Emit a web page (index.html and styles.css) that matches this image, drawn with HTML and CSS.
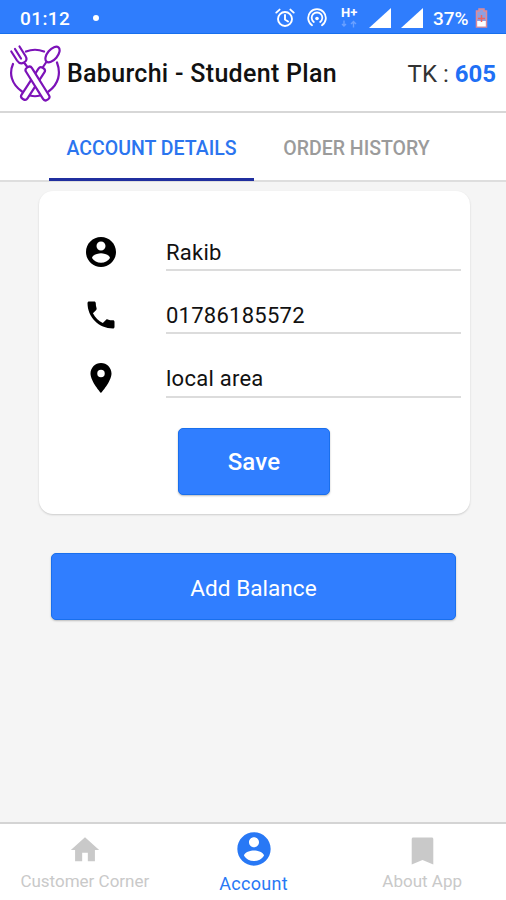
FILE: index.html
```html
<!doctype html>
<html>
<head>
<meta charset="utf-8">
<title>Baburchi - Student Plan</title>
<meta name="viewport" content="width=device-width,initial-scale=1">
<link rel="stylesheet" href="styles.css">
</head>
<body>
<div class="status">
	<span class="time">01:12</span>
	<span class="dot"></span>
	<svg class="alarm" width="20" height="20" viewBox="0 0 20 20" fill="none" stroke="#fff" stroke-width="1.9" stroke-linecap="round">
		<circle cx="10" cy="11" r="7"/><path d="M10 7v4.5l3 2M1.3 4.6l3.3-3M18.7 4.6l-3.3-3"/>
	</svg>
	<svg class="hotspot" width="20" height="20" viewBox="0 0 20 20" fill="none" stroke="#fff" stroke-width="1.8" stroke-linecap="round">
		<path d="M5 17.2a8.8 8.8 0 1 1 10 0M6.8 14a5.3 5.3 0 1 1 6.4 0"/><circle cx="10" cy="10.500" r="1.8" fill="#fff" stroke="none"/>
	</svg>
	<span class="net">
		<b>H+</b>
		<svg width="16" height="8" viewBox="0 0 16 7" fill="none" stroke="#6aa0ff" stroke-width="1.4"><path d="M3 0v5M1 3.500l2 2 2-2M12.500 7V2M10 3.500l2.500-2.500 2.500 2.500"/></svg>
	</span>
	<svg class="signal" width="22" height="20" viewBox="0 0 22 20"><path d="M0 20L22 0v20z" fill="#fff"/></svg>
	<svg class="signal two" width="22" height="20" viewBox="0 0 22 20"><path d="M0 20L22 0v20z" fill="#fff"/></svg>
	<span class="percent">37%</span>
	<svg class="battery" width="13" height="20" viewBox="0 0 13 20">
		<path d="M4 1h5v2h2.500v16h-10V3H4z" fill="#8f9fe0" stroke="#e28a93" stroke-width="1.500"/>
		<path d="M2.200 13h8.600v5.500H2.200z" fill="#fff"/><path d="M6.500 7v7M3 10.500h7" stroke="#ee6560" stroke-width="1.500"/>
	</svg>
</div>
<header class="header">
	<svg class="logo" width="52" height="58" viewBox="0 0 52 58" fill="none" stroke="#7c12b8" stroke-width="2.200" stroke-linecap="round" stroke-linejoin="round">
		<path d="M17 7.500Q26 4 35 7.500M4 20C0 29 2 40 13 47.500M48 18.500C52 29 50 40 39.500 47.500M21 51.500q5 1.500 10 0"/>
		<path d="M2.300 7.500L8 16.500Q11 21 15 18.500T16.500 12L10.500 2.500M6 5l6 9.500M15 18.500l3 4M34 23l3-4.500"/>
		<ellipse cx="43.500" cy="10.500" rx="5" ry="9.300" transform="rotate(40 43.500 10.500)"/>
		<rect x="20.500" y="21" width="7" height="37" rx="3" transform="rotate(33 24 39.500)" fill="#fff"/>
		<rect x="25" y="20.500" width="7" height="38" rx="3" transform="rotate(-32 28.500 39.500)" fill="#fff"/>
	</svg>
	<h1 class="title">Baburchi - Student Plan</h1>
	<span class="balance">TK : <b>605</b></span>
</header>
<nav class="tabs">
	<a class="tab active">ACCOUNT DETAILS</a>
	<a class="tab">ORDER HISTORY</a>
</nav>
<main class="content">
	<form class="card">
		<div class="row">
			<svg width="36" height="36" viewBox="0 0 24 24"><path d="M12 2C6.480 2 2 6.480 2 12s4.480 10 10 10 10-4.480 10-10S17.520 2 12 2zm0 3c1.660 0 3 1.340 3 3s-1.340 3-3 3-3-1.340-3-3 1.340-3 3-3zm0 14.200c-2.500 0-4.710-1.280-6-3.220.030-1.990 4-3.080 6-3.080 1.990 0 5.970 1.090 6 3.080-1.290 1.940-3.500 3.220-6 3.220z"/></svg>
			<span class="field name">Rakib</span>
		</div>
		<div class="row">
			<svg width="36" height="36" viewBox="0 0 24 24"><path d="M6.620 10.790c1.440 2.830 3.760 5.140 6.590 6.590l2.200-2.200c.270-.270.670-.360 1.020-.240 1.120.370 2.330.570 3.570.570.550 0 1 .450 1 1V20c0 .550-.450 1-1 1-9.390 0-17-7.610-17-17 0-.550.450-1 1-1h3.500c.550 0 1 .450 1 1 0 1.250.200 2.450.570 3.570.110.350.030.740-.250 1.020l-2.200 2.200z"/></svg>
			<span class="field phone">01786185572</span>
		</div>
		<div class="row">
			<svg width="36" height="36" viewBox="0 0 24 24"><path d="M12 2C8.130 2 5 5.130 5 9c0 5.250 7 13 7 13s7-7.750 7-13c0-3.870-3.130-7-7-7zm0 9.500a2.500 2.500 0 0 1 0-5 2.500 2.500 0 0 1 0 5z"/></svg>
			<span class="field area">local area</span>
		</div>
		<button class="btn save" type="button">Save</button>
	</form>
	<button class="btn add" type="button">Add Balance</button>
</main>
<footer class="bottom">
	<a class="item">
		<svg width="34" height="34" viewBox="0 0 24 24"><path d="M10 20v-6h4v6h5v-8h3L12 3 2 12h3v8z"/></svg>
		<span class="corner">Customer Corner</span>
	</a>
	<a class="item active">
		<svg width="40" height="40" viewBox="0 0 24 24"><path d="M12 2C6.480 2 2 6.480 2 12s4.480 10 10 10 10-4.480 10-10S17.520 2 12 2zm0 3c1.660 0 3 1.340 3 3s-1.340 3-3 3-3-1.340-3-3 1.340-3 3-3zm0 14.200c-2.500 0-4.710-1.280-6-3.220.030-1.990 4-3.080 6-3.080 1.990 0 5.970 1.090 6 3.080-1.290 1.940-3.500 3.220-6 3.220z"/></svg>
		<span class="account">Account</span>
	</a>
	<a class="item">
		<svg width="37" height="36" viewBox="0 0 24 24" preserveAspectRatio="none"><path d="M18 3H6c-.600 0-1 .400-1 1v17l7-3 7 3V4c0-.600-.400-1-1-1z"/></svg>
		<span class="about">About App</span>
	</a>
</footer>
</body>
</html>
```
FILE: styles.css
```css
*{box-sizing:border-box;}
body{margin:0;height:900px;display:flex;flex-direction:column;overflow:hidden;font-family:Roboto,"Liberation Sans",sans-serif;background:#f5f5f5;color:#111;}
svg{display:block;flex:none;}
.status{height:34px;display:flex;align-items:center;padding:2px 18px 0 20px;background:#2f7dfd;border-bottom:1px solid #176fed;color:#fff;font-size:19px;font-weight:500;}
.time{width:50px;padding-top:1px;letter-spacing:0.4px;}
.dot{width:6px;height:6px;margin-left:23px;border-radius:50%;background:#fff;}
.alarm{margin-left:auto;}
.hotspot{margin-left:12px;}
.net{width:16px;height:22px;margin-left:14px;font-size:13px;line-height:11px;}
.net b{display:block;margin:0 0 2px;}
.signal{margin-left:12px;}
.two{margin-left:10px;}
.percent{width:38px;margin:0 4px 0 10px;padding-top:1px;}
.header{height:79px;display:flex;align-items:center;padding:0 10px 0 9px;background:#fff;border-bottom:2px solid #d7d7d7;}
.title{margin:2px 0 0 6px;font-size:25px;font-weight:500;letter-spacing:0.3px;white-space:nowrap;}
.balance{margin:3px 0 0 auto;font-size:24px;color:#333;white-space:nowrap;}
.balance b{color:#1f70f5;font-weight:700;}
.tabs{height:69px;display:flex;padding-left:49px;background:#fff;border-bottom:2px solid #dedede;}
.tab{width:205px;height:68px;padding-top:23px;text-align:center;font-size:19.5px;line-height:26px;font-weight:500;color:#9b9b9b;}
.tabs .active{color:#2b75ef;border-bottom:3px solid #202f9f;}
.content{flex:1;padding:9px 36px 0 39px;}
.card{height:323px;padding:29px 9px 0 44px;border-radius:14px;background:#fff;box-shadow:0 1px 2px #ccc;}
.row{height:63.25px;display:flex;align-items:flex-start;}
.row svg{margin-top:13.5px;}
.field{flex:1;height:51px;margin-left:47px;padding-top:20px;font-size:22px;line-height:26px;letter-spacing:0.25px;border-bottom:2px solid #dcdcdc;}
.area{padding-top:19px;}
.btn{display:block;height:67px;padding:2px 0 0;border:1px solid #196fed;border-radius:5px;background:#307eff;color:#fff;font:500 24px Roboto,"Liberation Sans",sans-serif;box-shadow:0 1px 2px #bbb;}
.save{width:152px;margin:18px 0 0 95px;letter-spacing:0.2px;}
.add{width:405px;margin:39px 0 0 12px;padding-top:3px;font-size:22.6px;font-weight:400;}
.bottom{height:78px;display:flex;padding:0;background:#fff;border-top:2px solid #d4d4d4;}
.item{flex:1;display:flex;flex-direction:column;align-items:center;padding-left:1px;font-size:17px;color:#c9c9c9;fill:#c9c9c9;}
.item svg{margin-top:9px;}
.item span{margin-top:2px;line-height:24px;white-space:nowrap;}
.item .about{margin-top:0;}
.item .account{margin-top:3px;font-size:18px;letter-spacing:0.3px;}
.bottom .active{color:#2878f5;fill:#2878f5;}
.bottom .active svg{margin-top:5px;}
```
